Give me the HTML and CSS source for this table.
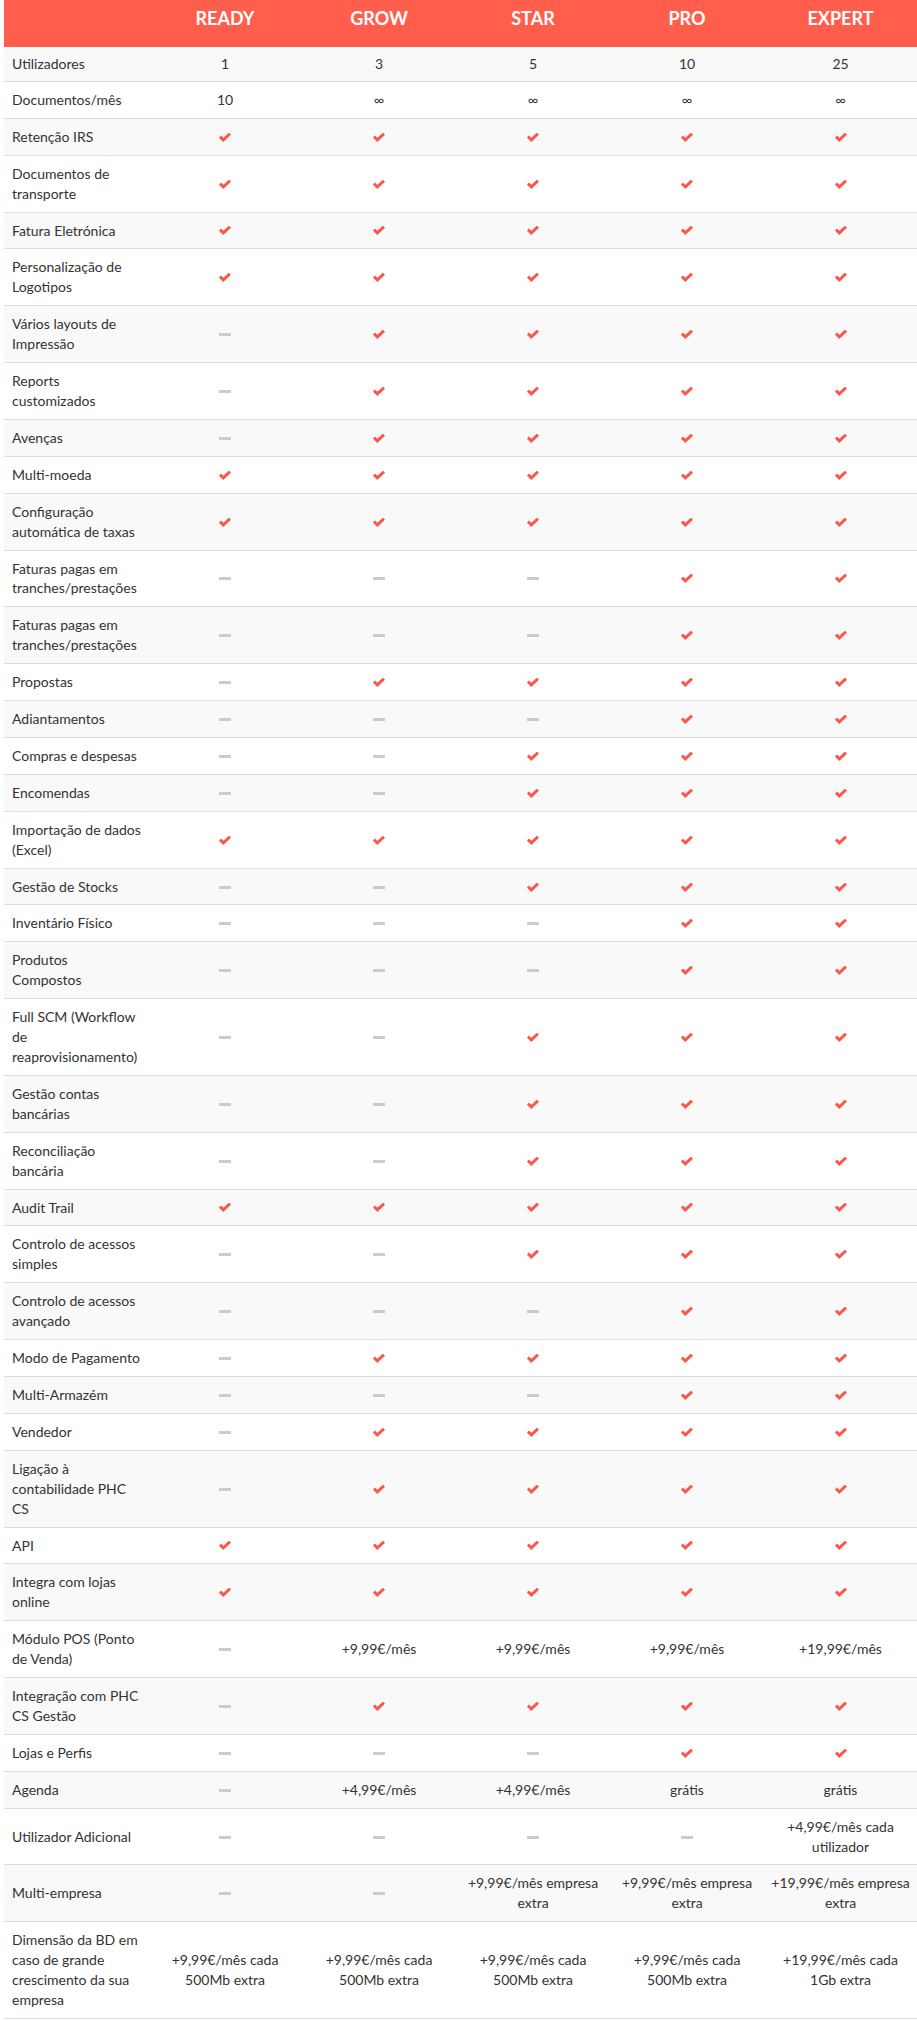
FILE: index.html
```html
<!DOCTYPE html>
<html lang="pt">
<head>
<meta charset="utf-8">
<title>Planos</title>
<link rel="stylesheet" href="styles.css">
</head>
<body>
<svg class="defs" width="0" height="0" aria-hidden="true">
  <symbol id="c" viewBox="0 0 12 9"><path d="M1 3.6 L4.3 6.9 L11 0.6" fill="none" stroke="#fb5849" stroke-width="2.9"/></symbol>
</svg>
<table class="plans">
  <colgroup><col class="c-label"><col class="c-val"><col class="c-val"><col class="c-val"><col class="c-val"><col class="c-last"></colgroup>
  <thead>
    <tr><th></th><th>READY</th><th>GROW</th><th>STAR</th><th>PRO</th><th>EXPERT</th></tr>
  </thead>
  <tbody>
    <tr><td>Utilizadores</td><td>1</td><td>3</td><td>5</td><td>10</td><td>25</td></tr>
    <tr><td>Documentos/mês</td><td>10</td><td>∞</td><td>∞</td><td>∞</td><td>∞</td></tr>
    <tr><td>Retenção IRS</td><td><svg class="ck"><use href="#c"/></svg></td><td><svg class="ck"><use href="#c"/></svg></td><td><svg class="ck"><use href="#c"/></svg></td><td><svg class="ck"><use href="#c"/></svg></td><td><svg class="ck"><use href="#c"/></svg></td></tr>
    <tr><td>Documentos de transporte</td><td><svg class="ck"><use href="#c"/></svg></td><td><svg class="ck"><use href="#c"/></svg></td><td><svg class="ck"><use href="#c"/></svg></td><td><svg class="ck"><use href="#c"/></svg></td><td><svg class="ck"><use href="#c"/></svg></td></tr>
    <tr><td>Fatura Eletrónica</td><td><svg class="ck"><use href="#c"/></svg></td><td><svg class="ck"><use href="#c"/></svg></td><td><svg class="ck"><use href="#c"/></svg></td><td><svg class="ck"><use href="#c"/></svg></td><td><svg class="ck"><use href="#c"/></svg></td></tr>
    <tr><td>Personalização de Logotipos</td><td><svg class="ck"><use href="#c"/></svg></td><td><svg class="ck"><use href="#c"/></svg></td><td><svg class="ck"><use href="#c"/></svg></td><td><svg class="ck"><use href="#c"/></svg></td><td><svg class="ck"><use href="#c"/></svg></td></tr>
    <tr><td>Vários layouts de Impressão</td><td><span class="no"></span></td><td><svg class="ck"><use href="#c"/></svg></td><td><svg class="ck"><use href="#c"/></svg></td><td><svg class="ck"><use href="#c"/></svg></td><td><svg class="ck"><use href="#c"/></svg></td></tr>
    <tr><td>Reports customizados</td><td><span class="no"></span></td><td><svg class="ck"><use href="#c"/></svg></td><td><svg class="ck"><use href="#c"/></svg></td><td><svg class="ck"><use href="#c"/></svg></td><td><svg class="ck"><use href="#c"/></svg></td></tr>
    <tr><td>Avenças</td><td><span class="no"></span></td><td><svg class="ck"><use href="#c"/></svg></td><td><svg class="ck"><use href="#c"/></svg></td><td><svg class="ck"><use href="#c"/></svg></td><td><svg class="ck"><use href="#c"/></svg></td></tr>
    <tr><td>Multi-moeda</td><td><svg class="ck"><use href="#c"/></svg></td><td><svg class="ck"><use href="#c"/></svg></td><td><svg class="ck"><use href="#c"/></svg></td><td><svg class="ck"><use href="#c"/></svg></td><td><svg class="ck"><use href="#c"/></svg></td></tr>
    <tr><td>Configuração automática de taxas</td><td><svg class="ck"><use href="#c"/></svg></td><td><svg class="ck"><use href="#c"/></svg></td><td><svg class="ck"><use href="#c"/></svg></td><td><svg class="ck"><use href="#c"/></svg></td><td><svg class="ck"><use href="#c"/></svg></td></tr>
    <tr><td>Faturas pagas em tranches/prestações</td><td><span class="no"></span></td><td><span class="no"></span></td><td><span class="no"></span></td><td><svg class="ck"><use href="#c"/></svg></td><td><svg class="ck"><use href="#c"/></svg></td></tr>
    <tr><td>Faturas pagas em tranches/prestações</td><td><span class="no"></span></td><td><span class="no"></span></td><td><span class="no"></span></td><td><svg class="ck"><use href="#c"/></svg></td><td><svg class="ck"><use href="#c"/></svg></td></tr>
    <tr><td>Propostas</td><td><span class="no"></span></td><td><svg class="ck"><use href="#c"/></svg></td><td><svg class="ck"><use href="#c"/></svg></td><td><svg class="ck"><use href="#c"/></svg></td><td><svg class="ck"><use href="#c"/></svg></td></tr>
    <tr><td>Adiantamentos</td><td><span class="no"></span></td><td><span class="no"></span></td><td><span class="no"></span></td><td><svg class="ck"><use href="#c"/></svg></td><td><svg class="ck"><use href="#c"/></svg></td></tr>
    <tr><td>Compras e despesas</td><td><span class="no"></span></td><td><span class="no"></span></td><td><svg class="ck"><use href="#c"/></svg></td><td><svg class="ck"><use href="#c"/></svg></td><td><svg class="ck"><use href="#c"/></svg></td></tr>
    <tr><td>Encomendas</td><td><span class="no"></span></td><td><span class="no"></span></td><td><svg class="ck"><use href="#c"/></svg></td><td><svg class="ck"><use href="#c"/></svg></td><td><svg class="ck"><use href="#c"/></svg></td></tr>
    <tr><td>Importação de dados (Excel)</td><td><svg class="ck"><use href="#c"/></svg></td><td><svg class="ck"><use href="#c"/></svg></td><td><svg class="ck"><use href="#c"/></svg></td><td><svg class="ck"><use href="#c"/></svg></td><td><svg class="ck"><use href="#c"/></svg></td></tr>
    <tr><td>Gestão de Stocks</td><td><span class="no"></span></td><td><span class="no"></span></td><td><svg class="ck"><use href="#c"/></svg></td><td><svg class="ck"><use href="#c"/></svg></td><td><svg class="ck"><use href="#c"/></svg></td></tr>
    <tr><td>Inventário Físico</td><td><span class="no"></span></td><td><span class="no"></span></td><td><span class="no"></span></td><td><svg class="ck"><use href="#c"/></svg></td><td><svg class="ck"><use href="#c"/></svg></td></tr>
    <tr><td>Produtos<br>Compostos</td><td><span class="no"></span></td><td><span class="no"></span></td><td><span class="no"></span></td><td><svg class="ck"><use href="#c"/></svg></td><td><svg class="ck"><use href="#c"/></svg></td></tr>
    <tr><td>Full SCM (Workflow de reaprovisionamento)</td><td><span class="no"></span></td><td><span class="no"></span></td><td><svg class="ck"><use href="#c"/></svg></td><td><svg class="ck"><use href="#c"/></svg></td><td><svg class="ck"><use href="#c"/></svg></td></tr>
    <tr><td>Gestão contas bancárias</td><td><span class="no"></span></td><td><span class="no"></span></td><td><svg class="ck"><use href="#c"/></svg></td><td><svg class="ck"><use href="#c"/></svg></td><td><svg class="ck"><use href="#c"/></svg></td></tr>
    <tr><td>Reconciliação bancária</td><td><span class="no"></span></td><td><span class="no"></span></td><td><svg class="ck"><use href="#c"/></svg></td><td><svg class="ck"><use href="#c"/></svg></td><td><svg class="ck"><use href="#c"/></svg></td></tr>
    <tr><td>Audit Trail</td><td><svg class="ck"><use href="#c"/></svg></td><td><svg class="ck"><use href="#c"/></svg></td><td><svg class="ck"><use href="#c"/></svg></td><td><svg class="ck"><use href="#c"/></svg></td><td><svg class="ck"><use href="#c"/></svg></td></tr>
    <tr><td>Controlo de acessos simples</td><td><span class="no"></span></td><td><span class="no"></span></td><td><svg class="ck"><use href="#c"/></svg></td><td><svg class="ck"><use href="#c"/></svg></td><td><svg class="ck"><use href="#c"/></svg></td></tr>
    <tr><td>Controlo de acessos avançado</td><td><span class="no"></span></td><td><span class="no"></span></td><td><span class="no"></span></td><td><svg class="ck"><use href="#c"/></svg></td><td><svg class="ck"><use href="#c"/></svg></td></tr>
    <tr><td>Modo de Pagamento</td><td><span class="no"></span></td><td><svg class="ck"><use href="#c"/></svg></td><td><svg class="ck"><use href="#c"/></svg></td><td><svg class="ck"><use href="#c"/></svg></td><td><svg class="ck"><use href="#c"/></svg></td></tr>
    <tr><td>Multi-Armazém</td><td><span class="no"></span></td><td><span class="no"></span></td><td><span class="no"></span></td><td><svg class="ck"><use href="#c"/></svg></td><td><svg class="ck"><use href="#c"/></svg></td></tr>
    <tr><td>Vendedor</td><td><span class="no"></span></td><td><svg class="ck"><use href="#c"/></svg></td><td><svg class="ck"><use href="#c"/></svg></td><td><svg class="ck"><use href="#c"/></svg></td><td><svg class="ck"><use href="#c"/></svg></td></tr>
    <tr><td>Ligação à contabilidade PHC CS</td><td><span class="no"></span></td><td><svg class="ck"><use href="#c"/></svg></td><td><svg class="ck"><use href="#c"/></svg></td><td><svg class="ck"><use href="#c"/></svg></td><td><svg class="ck"><use href="#c"/></svg></td></tr>
    <tr><td>API</td><td><svg class="ck"><use href="#c"/></svg></td><td><svg class="ck"><use href="#c"/></svg></td><td><svg class="ck"><use href="#c"/></svg></td><td><svg class="ck"><use href="#c"/></svg></td><td><svg class="ck"><use href="#c"/></svg></td></tr>
    <tr><td>Integra com lojas online</td><td><svg class="ck"><use href="#c"/></svg></td><td><svg class="ck"><use href="#c"/></svg></td><td><svg class="ck"><use href="#c"/></svg></td><td><svg class="ck"><use href="#c"/></svg></td><td><svg class="ck"><use href="#c"/></svg></td></tr>
    <tr><td>Módulo POS (Ponto de Venda)</td><td><span class="no"></span></td><td>+9,99€/mês</td><td>+9,99€/mês</td><td>+9,99€/mês</td><td>+19,99€/mês</td></tr>
    <tr><td>Integração com PHC CS Gestão</td><td><span class="no"></span></td><td><svg class="ck"><use href="#c"/></svg></td><td><svg class="ck"><use href="#c"/></svg></td><td><svg class="ck"><use href="#c"/></svg></td><td><svg class="ck"><use href="#c"/></svg></td></tr>
    <tr><td>Lojas e Perfis</td><td><span class="no"></span></td><td><span class="no"></span></td><td><span class="no"></span></td><td><svg class="ck"><use href="#c"/></svg></td><td><svg class="ck"><use href="#c"/></svg></td></tr>
    <tr><td>Agenda</td><td><span class="no"></span></td><td>+4,99€/mês</td><td>+4,99€/mês</td><td>grátis</td><td>grátis</td></tr>
    <tr><td>Utilizador Adicional</td><td><span class="no"></span></td><td><span class="no"></span></td><td><span class="no"></span></td><td><span class="no"></span></td><td>+4,99€/mês cada utilizador</td></tr>
    <tr><td>Multi-empresa</td><td><span class="no"></span></td><td><span class="no"></span></td><td>+9,99€/mês empresa extra</td><td>+9,99€/mês empresa extra</td><td>+19,99€/mês empresa extra</td></tr>
    <tr><td>Dimensão da BD em caso de grande crescimento da sua empresa</td><td>+9,99€/mês cada 500Mb extra</td><td>+9,99€/mês cada 500Mb extra</td><td>+9,99€/mês cada 500Mb extra</td><td>+9,99€/mês cada 500Mb extra</td><td>+19,99€/mês cada 1Gb extra</td></tr>
  </tbody>
</table>
</body>
</html>
```

FILE: styles.css
```css
html, body {
  margin: 0;
  padding: 0;
  background: #ffffff;
  overflow-x: hidden;
}
body {
  font-family: "Lato", "Open Sans", "Liberation Sans", sans-serif;
  font-size: 14px;
  line-height: 19.9px;
  color: #333333;
}
.defs {
  position: absolute;
  width: 0;
  height: 0;
  overflow: hidden;
}
.plans {
  table-layout: fixed;
  border-collapse: collapse;
  width: 913px;
  margin-left: 4px;
}
.c-label { width: 144px; }
.c-val { width: 154px; }
.c-last { width: 153px; }
.plans thead th {
  background: #ff5e4c;
  color: #ffffff;
  font-weight: 700;
  font-size: 18px;
  line-height: 24px;
  padding: 6px 0 17px;
  text-align: center;
}
.plans td {
  padding: 8px 6px;
  text-align: center;
  vertical-align: middle;
  border-bottom: 1px solid #dddddd;
}
.plans td:first-child {
  text-align: left;
  padding: 8px 7px 8px 8px;
}
.plans tbody tr:first-child td {
  padding-top: 7px;
  padding-bottom: 7px;
}
.plans tbody tr:nth-child(odd) td {
  background: #f9f9f9;
}
.ck {
  display: inline-block;
  width: 12px;
  height: 9px;
  vertical-align: middle;
  position: relative;
  top: -1px;
}
.no {
  display: inline-block;
  width: 12px;
  height: 3px;
  background: #cccccc;
  vertical-align: middle;
  position: relative;
  top: -1px;
}
```
